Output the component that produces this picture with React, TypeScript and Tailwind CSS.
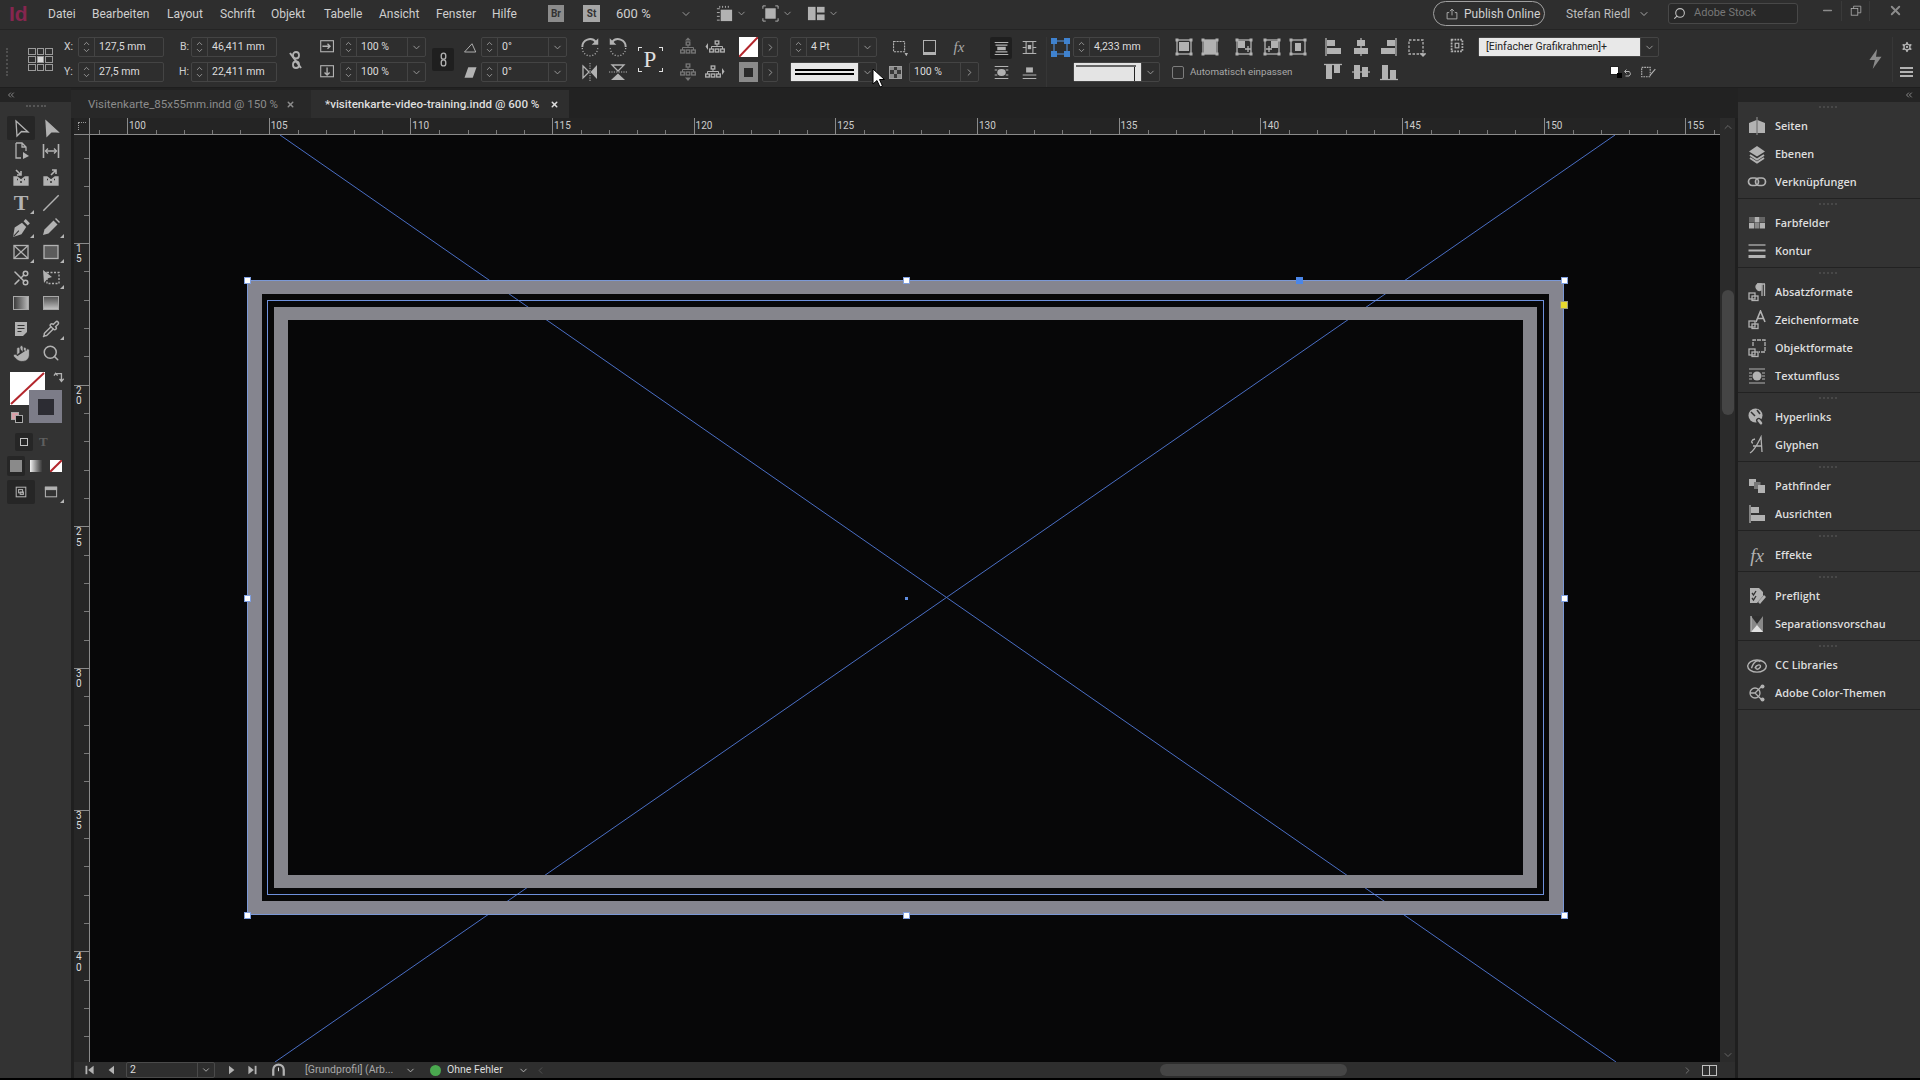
import type { ReactNode } from "react";
import { ChevronDown, ChevronRight, ChevronUp, ChevronLeft, ChevronsLeft, ChevronsRight, Hand, Pipette, Scissors, Search, Settings, X, Minus } from "lucide-react";

const FONT = "font-['Roboto','Liberation_Sans',sans-serif]";

function G({ s = 20, children, className = "" }: { s?: number; children: ReactNode; className?: string }) {
	return (
		<svg width={s} height={s} viewBox="0 0 20 20" fill="none" stroke="currentColor" strokeWidth="1.3" className={`shrink-0 text-[#b2b2b2] ${className}`}>
			{children}
		</svg>
	);
}

function Fly() {
	return <span className="absolute right-[1px] bottom-[1px] h-0 w-0 border-b-[4px] border-l-[4px] border-b-[#b5b5b5] border-l-transparent" />;
}

function ToolCell({ children, fly = false, active = false }: { children: ReactNode; fly?: boolean; active?: boolean }) {
	return (
		<div className={`relative flex h-[24px] w-[28px] items-center justify-center rounded-[2px] ${active ? "bg-[#262626]" : ""}`}>
			{children}
			{fly && <Fly />}
		</div>
	);
}

function ToolRow({ className, children }: { className: string; children: ReactNode }) {
	return <div className={`flex items-center gap-[2px] pl-[7px] ${className}`}>{children}</div>;
}

function Toolbar() {
	return (
		<div className="flex w-[71px] shrink-0 flex-col bg-[#242424]">
			<div className="flex h-[14px] items-center pl-[6px] text-[#9a9a9a]">
				<ChevronsLeft size={10} />
			</div>
			<div className="flex flex-1 flex-col bg-[#333333]">
				<div className="flex h-[15px] justify-center pt-[3px]">
					<div className="h-[3px] w-[20px] border-t-2 border-dotted border-[#565656]" />
				</div>
				<ToolRow className="h-[22px]">
					<ToolCell active>
						<G><path d="M5 3 L17 14 L10.5 13.5 L6 18 Z" /></G>
					</ToolCell>
					<ToolCell>
						<G><path d="M5 3 L17 14 L10.5 13.5 L6 18 Z" fill="currentColor" /></G>
					</ToolCell>
				</ToolRow>
				<ToolRow className="h-[24px]">
					<ToolCell>
						<G><path d="M5 2 H11 L15 6 V10 M5 2 V17 H10 M11 2 V6 H15" /><path d="M12 11 L18 15 L12 18 Z" fill="currentColor" stroke="none" /></G>
					</ToolCell>
					<ToolCell>
						<G><path d="M2.5 3 V17 M17.5 3 V17 M5 10 H15" strokeWidth="1.6" /><path d="M7 7.5 L4.5 10 L7 12.5 M13 7.5 L15.5 10 L13 12.5" /></G>
					</ToolCell>
				</ToolRow>
				<ToolRow className="h-[28px]">
					<ToolCell>
						<G><path d="M3 10 H6 L10 13 L14 10 H17 V18 H3 Z" fill="currentColor" /><path d="M6 12.5 H7 M9 15 H11 M13 12.5 H14" stroke="#333" /><path d="M5 3 L10 8 M10 4 V8 H6" strokeWidth="1.6" /></G>
					</ToolCell>
					<ToolCell>
						<G><path d="M3 10 H6 L10 13 L14 10 H17 V18 H3 Z" fill="currentColor" /><path d="M6 12.5 H7 M9 15 H11 M13 12.5 H14" stroke="#333" /><path d="M10 8 L15 3 M11 3 H15 V7" strokeWidth="1.6" /></G>
					</ToolCell>
				</ToolRow>
				<ToolRow className="h-[24px]">
					<ToolCell fly>
						<span className="font-['Liberation_Serif',serif] text-[22px] leading-none font-bold text-[#b2b2b2]">T</span>
					</ToolCell>
					<ToolCell>
						<G s={22}><path d="M3 17 L17 3" strokeWidth="1.3" /></G>
					</ToolCell>
				</ToolRow>
				<ToolRow className="h-[24px]">
					<ToolCell fly>
						<G s={21}><path d="M2 19 L3.5 10 L10.5 5.5 L14.5 9.5 L10 16.5 Z" fill="currentColor" stroke="none" /><path d="M12 4 L14 2 L18 6 L16 8 Z" fill="currentColor" stroke="none" /><path d="M2.5 18.5 L7.5 13" stroke="#333" strokeWidth="1" /></G>
					</ToolCell>
					<ToolCell fly>
						<G s={20}><path d="M2 18 L3.5 12.5 L12.5 3.5 L16.5 7.5 L7.5 16.5 Z" fill="currentColor" stroke="none" /><path d="M14 2 L15 1 L19 5 L18 6 Z" fill="currentColor" stroke="none" /></G>
					</ToolCell>
				</ToolRow>
				<ToolRow className="h-[26px]">
					<ToolCell fly>
						<G><rect x="3" y="3.5" width="14" height="13" /><path d="M3 3.5 L17 16.5 M17 3.5 L3 16.5" /></G>
					</ToolCell>
					<ToolCell fly>
						<G><rect x="3" y="3.5" width="14" height="13" fill="#5c5c5c" /></G>
					</ToolCell>
				</ToolRow>
				<ToolRow className="h-[26px]">
					<ToolCell>
						<Scissors size={18} className="-scale-x-100 text-[#b8b8b8]" strokeWidth={2} />
					</ToolCell>
					<ToolCell fly>
						<G><rect x="6" y="4.5" width="12" height="11" strokeDasharray="2 1.5" /><path d="M2 2 L11 9 L6.5 10.5 L3 15 Z" fill="currentColor" stroke="none" /></G>
					</ToolCell>
				</ToolRow>
				<ToolRow className="h-[24px]">
					<ToolCell>
						<div className="h-[14px] w-[16px] border border-[#a8a8a8] bg-gradient-to-r from-[#3e3e3e] to-[#b8b8b8]" />
					</ToolCell>
					<ToolCell>
						<div className="h-[14px] w-[16px] border border-[#a8a8a8] bg-gradient-to-b from-[#555555] to-[#c0c0c0]" />
					</ToolCell>
				</ToolRow>
				<ToolRow className="h-[28px]">
					<ToolCell>
						<G><path d="M4 3 H16 V13 L12 17 H4 Z" fill="currentColor" stroke="none" /><path d="M6.5 6.5 H13.5 M6.5 9.5 H13.5 M6.5 12.5 H10.5" stroke="#333" strokeWidth="1.2" /></G>
					</ToolCell>
					<ToolCell fly>
						<Pipette size={18} className="text-[#b2b2b2]" />
					</ToolCell>
				</ToolRow>
				<ToolRow className="h-[20px]">
					<ToolCell>
						<Hand size={19} className="text-[#c2c2c2]" fill="#b2b2b2" stroke="#333" strokeWidth={1} />
					</ToolCell>
					<ToolCell>
						<Search size={18} className="text-[#b2b2b2]" />
					</ToolCell>
				</ToolRow>
				<div className="relative h-[70px]">
					<div className="absolute top-[9px] left-[10px] h-[33px] w-[35px] overflow-hidden bg-white">
						<svg width="35" height="33" viewBox="0 0 35 33">
							<path d="M1 32 L34 1" stroke="#b3262c" strokeWidth="2" />
						</svg>
					</div>
					<div className="absolute top-[27px] left-[29px] flex h-[33px] w-[33px] items-center justify-center bg-[#7c7c88]">
						<div className="h-[16px] w-[16px] bg-[#2c2c33]" />
					</div>
					<div className="absolute top-[8px] left-[53px]">
						<G s={13}><path d="M4 4 H13 V15 M1.5 7 L4 3.5 L7 7 M10 12 L13 16 L16.5 12" strokeWidth="2" /></G>
					</div>
					<div className="absolute top-[49px] left-[11px] h-[8px] w-[8px] border border-[#aaaaaa] bg-[#d8a0a8]" />
					<div className="absolute top-[52px] left-[15px] h-[8px] w-[8px] border border-[#aaaaaa] bg-[#1c1c1c]" />
				</div>
				<div className="flex h-[18px] items-center pl-[15px]">
					<div className="flex h-[18px] w-[18px] items-center justify-center rounded-[2px] bg-[#262626]">
						<div className="h-[8px] w-[8px] border border-[#c2c2c2]" />
					</div>
					<span className="ml-[6px] font-['Liberation_Serif',serif] text-[13px] font-bold text-[#5f5f5f]">T</span>
				</div>
				<div className="mt-[3px] flex h-[24px] items-center pl-[7px]">
					<div className="relative flex h-[20px] w-[18px] items-center justify-center rounded-[2px] bg-[#262626]">
						<div className="h-[12px] w-[12px] bg-[#8a8a8a]" />
					</div>
					<div className="ml-[5px] h-[12px] w-[12px] bg-gradient-to-r from-[#f2f2f2] to-[#3a3a3a]" />
					<div className="ml-[8px] h-[12px] w-[12px] overflow-hidden bg-white">
						<svg width="12" height="12" viewBox="0 0 12 12"><path d="M0 12 L12 0" stroke="#b3262c" strokeWidth="2" /></svg>
					</div>
				</div>
				<div className="mt-[2px] flex h-[24px] items-center gap-[2px] pl-[7px]">
					<ToolCell active>
						<G s={16}><rect x="4" y="4" width="12" height="12" /><rect x="7" y="7" width="5" height="4" /><rect x="9" y="10" width="4" height="3" /></G>
					</ToolCell>
					<ToolCell fly>
						<G s={16}><rect x="3" y="4" width="14" height="12" /><rect x="3" y="4" width="14" height="3" fill="currentColor" /></G>
					</ToolCell>
				</div>
			</div>
		</div>
	);
}

function Spin() {
	return (
		<div className="flex h-full w-[16px] shrink-0 flex-col items-center justify-center border-r border-[#444444] text-[#b0b0b0]">
			<ChevronUp size={9} className="-mb-[1px]" />
			<ChevronDown size={9} className="-mt-[1px]" />
		</div>
	);
}

function Drop() {
	return (
		<div className="flex h-full w-[18px] shrink-0 items-center justify-center border-l border-[#444444] text-[#a0a0a0]">
			<ChevronDown size={11} />
		</div>
	);
}

function Field({ value, drop = false }: { value: string; drop?: boolean }) {
	return (
		<div className="flex h-[20px] w-full items-center rounded-[2px] border border-[#444444] text-[10.5px] text-[#dcdcdc]">
			<Spin />
			<span className="flex-1 truncate pl-[4px]">{value}</span>
			{drop && <Drop />}
		</div>
	);
}

function Col({ className = "", children }: { className?: string; children: ReactNode }) {
	return <div className={`flex h-[45px] shrink-0 flex-col items-center justify-between ${className}`}>{children}</div>;
}

function Slot({ children, className = "" }: { children?: ReactNode; className?: string }) {
	return <div className={`flex h-[20px] shrink-0 items-center justify-center ${className}`}>{children}</div>;
}

function SwatchNone() {
	return (
		<div className="h-[20px] w-[19px] overflow-hidden bg-white">
			<svg width="19" height="20" viewBox="0 0 19 20"><path d="M0 20 L19 0" stroke="#b3262c" strokeWidth="2" /></svg>
		</div>
	);
}

function ArrowBox() {
	return (
		<div className="flex h-[20px] w-[16px] items-center justify-center rounded-[2px] border border-[#444444] text-[#a0a0a0]">
			<ChevronRight size={11} />
		</div>
	);
}

function RefGrid() {
	return (
		<div className="grid w-[25px] grid-cols-3 gap-[1px]">
			{[0, 1, 2, 3, 4, 5, 6, 7, 8].map(i => (
				<div key={i} className={`h-[7px] w-[7.5px] border border-[#9a9a9a] ${i === 4 ? "bg-[#d8d8d8]" : ""}`} />
			))}
		</div>
	);
}

function AlignIcon({ kind }: { kind: "l" | "c" | "r" | "t" | "m" | "b" }) {
	return (
		<G>
			{kind === "l" && <><path d="M3 1 V19" /><rect x="4" y="3" width="8" height="6" fill="currentColor" stroke="none" /><rect x="4" y="11" width="14" height="6" fill="currentColor" stroke="none" /></>}
			{kind === "c" && <><path d="M10 1 V19" /><rect x="6" y="3" width="8" height="6" fill="currentColor" stroke="none" /><rect x="3" y="11" width="14" height="6" fill="currentColor" stroke="none" /></>}
			{kind === "r" && <><path d="M17 1 V19" /><rect x="8" y="3" width="8" height="6" fill="currentColor" stroke="none" /><rect x="2" y="11" width="14" height="6" fill="currentColor" stroke="none" /></>}
			{kind === "t" && <><path d="M1 2.5 H19" /><rect x="3" y="3" width="6" height="14" fill="currentColor" stroke="none" /><rect x="11" y="3" width="6" height="8" fill="currentColor" stroke="none" /></>}
			{kind === "m" && <><path d="M1 10 H19" /><rect x="3" y="3" width="6" height="14" fill="currentColor" stroke="none" /><rect x="11" y="5" width="6" height="10" fill="currentColor" stroke="none" /></>}
			{kind === "b" && <><path d="M1 17.5 H19" /><rect x="3" y="3" width="6" height="14" fill="currentColor" stroke="none" /><rect x="11" y="8" width="6" height="9" fill="currentColor" stroke="none" /></>}
		</G>
	);
}

function FrameFit({ inner }: { inner: ReactNode }) {
	return (
		<G>
			<rect x="3" y="3" width="14" height="14" />
			{inner}
			<path d="M1.5 1.5 h3 v3 h-3 z M15.5 1.5 h3 v3 h-3 z M1.5 15.5 h3 v3 h-3 z M15.5 15.5 h3 v3 h-3 z" fill="currentColor" stroke="none" />
		</G>
	);
}

function RotateIcon({ flip = false }: { flip?: boolean }) {
	return (
		<G s={22} className={flip ? "-scale-x-100" : ""}>
			<path d="M3 10 A7 7 0 0 1 15.5 5.5" strokeWidth="1.8" />
			<path d="M3 11 A7 7 0 0 0 17 11" strokeDasharray="1 1.6" strokeWidth="1.2" />
			<path d="M17.5 2 V8 H11.5 Z" fill="currentColor" stroke="none" />
		</G>
	);
}

function TreeIcon({ top }: { top: number }) {
	return (
		<>
			<rect x="8.2" y={top} width="3.6" height="3" />
			<path d={`M10 ${top + 3} V${top + 5.5} M4.5 ${top + 8} V${top + 5.5} H15.5 V${top + 8}`} strokeWidth="1" />
			<rect x="2.7" y={top + 8} width="3.6" height="3" />
			<rect x="8.2" y={top + 8} width="3.6" height="3" />
			<rect x="13.7" y={top + 8} width="3.6" height="3" />
		</>
	);
}

function MenuBar() {
	const items: [string, string][] = [
		["Datei", "w-[44px]"],
		["Bearbeiten", "w-[75px]"],
		["Layout", "w-[53px]"],
		["Schrift", "w-[51px]"],
		["Objekt", "w-[53px]"],
		["Tabelle", "w-[55px]"],
		["Ansicht", "w-[57px]"],
		["Fenster", "w-[56px]"],
		["Hilfe", "w-[56px]"]
	];
	return (
		<div className="flex h-[30px] shrink-0 items-center border-b border-[#242424] bg-[#2e2e2e] pb-[2px] text-[12px] text-[#cfcfcf]">
			<span className="ml-[9px] w-[39px] font-['Liberation_Sans',sans-serif] text-[21px] leading-none font-bold text-[#86264f]">Id</span>
			{items.map(([label, w]) => (
				<span key={label} className={w}>{label}</span>
			))}
			<span className="flex h-[17px] w-[16px] items-center justify-center bg-[#8c8c8c] text-[10px] font-bold text-[#333333]">Br</span>
			<span className="ml-[19px] flex h-[17px] w-[17px] items-center justify-center bg-[#a6a6a6] text-[10px] font-bold text-[#333333]">St</span>
			<span className="ml-[16px] w-[64px] text-[13px]">600 %</span>
			<ChevronDown size={12} className="text-[#9a9a9a]" />
			<div className="ml-[22px] flex w-[20px] justify-center">
				<G s={19}><path d="M2 5 H5 M2 9 H5 M2 13 H5 M2 17 H5 M5 2 V4 M8 2 V4 M11 2 V4 M14 2 V4" strokeWidth="1" /><rect x="6" y="6" width="12" height="12" fill="currentColor" stroke="none" /></G>
			</div>
			<ChevronDown size={11} className="ml-[2px] text-[#9a9a9a]" />
			<div className="ml-[13px] flex w-[20px] justify-center">
				<G s={19}><path d="M2 5 V2 H5 M15 2 H18 V5 M18 15 V18 H15 M5 18 H2 V15" strokeWidth="1" /><rect x="4.5" y="4.5" width="11" height="11" fill="currentColor" stroke="none" /></G>
			</div>
			<ChevronDown size={11} className="ml-[2px] text-[#9a9a9a]" />
			<div className="ml-[13px] flex w-[20px] justify-center">
				<G s={19}><rect x="1" y="3" width="8" height="14" fill="currentColor" stroke="none" /><rect x="10.5" y="3" width="8" height="6" fill="currentColor" stroke="none" /><rect x="10.5" y="11" width="8" height="6" fill="currentColor" stroke="none" /></G>
			</div>
			<ChevronDown size={11} className="ml-[2px] text-[#9a9a9a]" />
			<div className="flex-1" />
			<div className="flex h-[25px] w-[112px] items-center rounded-full border border-[#a0a0a0] pl-[11px] text-[#d2d2d2]">
				<G s={14}><path d="M10 12 V3 M7 6 L10 3 L13 6 M6 8 H3 V17 H17 V8 H14" /></G>
				<span className="ml-[5px] whitespace-nowrap">Publish Online</span>
			</div>
			<span className="ml-[21px] w-[72px] text-[#bdbdbd]">Stefan Riedl</span>
			<ChevronDown size={12} className="text-[#a8a8a8]" />
			<div className="ml-[18px] flex h-[21px] w-[130px] items-center rounded-[3px] border border-[#484848] bg-[#282828] pl-[4px] text-[11px] text-[#777777]">
				<Search size={13} className="-scale-x-100 text-[#c0c0c0]" />
				<span className="ml-[8px]">Adobe Stock</span>
			</div>
			<div className="ml-[16px] flex h-[20px] -translate-y-[3px] items-center text-[#8c8c8c]">
				<div className="flex h-full w-[28px] items-center justify-center border-r border-[#3a3a3a]"><Minus size={13} strokeWidth={3} /></div>
				<div className="flex h-full w-[28px] items-center justify-center border-r border-[#3a3a3a]"><G s={12}><rect x="2" y="6" width="11" height="11" /><path d="M6 6 V2 H18 V13 H13" /></G></div>
				<div className="flex h-full w-[50px] items-center justify-center"><X size={15} strokeWidth={3} /></div>
			</div>
		</div>
	);
}

function ControlBar() {
	return (
		<div className="flex h-[58px] shrink-0 border-b border-[#1e1e1e] bg-[#2e2e2e] pt-[7px] text-[10.5px] text-[#cfcfcf]">
			<div className="flex w-[28px] shrink-0 items-center pl-[6px]">
				<div className="h-[28px] w-[3px] border-l-2 border-dotted border-[#4f4f4f]" />
			</div>
			<div className="flex h-[45px] w-[36px] shrink-0 items-center"><RefGrid /></div>
			<Col className="w-[14px] !items-start"><Slot>X:</Slot><Slot>Y:</Slot></Col>
			<Col className="w-[86px]"><Field value="127,5 mm" /><Field value="27,5 mm" /></Col>
			<Col className="w-[27px] !items-end pr-[2px]"><Slot>B:</Slot><Slot>H:</Slot></Col>
			<Col className="w-[86px]"><Field value="46,411 mm" /><Field value="22,411 mm" /></Col>
			<div className="flex h-[45px] w-[38px] shrink-0 items-center justify-center">
				<G s={20}><rect x="7" y="2" width="6" height="6.5" rx="3" strokeWidth="1.8" /><rect x="7" y="11.5" width="6" height="6.5" rx="3" strokeWidth="1.8" /><path d="M4 3 L15 18" strokeWidth="2" /></G>
			</div>
			<Col className="w-[25px]">
				<Slot><G s={17}><rect x="2" y="2" width="15" height="13" /><path d="M4 8.5 H13 M10 5.5 L13 8.5 L10 11.5" strokeWidth="1.6" /></G></Slot>
				<Slot><G s={17}><rect x="2" y="2" width="15" height="13" /><path d="M9.5 4 V13 M6.5 10 L9.5 13 L12.5 10" strokeWidth="1.6" /></G></Slot>
			</Col>
			<Col className="w-[86px]"><Field value="100 %" drop /><Field value="100 %" drop /></Col>
			<div className="flex h-[45px] w-[34px] shrink-0 items-center justify-center">
				<div className="flex h-[23px] w-[22px] items-center justify-center rounded-[2px] bg-[#1f1f1f]">
					<G s={15}><rect x="7" y="1.5" width="6" height="8" rx="3" strokeWidth="1.8" /><rect x="7" y="10.5" width="6" height="8" rx="3" strokeWidth="1.8" /></G>
				</div>
			</div>
			<Col className="w-[21px]">
				<Slot><G s={15}><path d="M2 16 H17 L12 5 M2 16 L12 5" /></G></Slot>
				<Slot><G s={15}><path d="M2 17 L7 3 H18 L13 17 Z" fill="currentColor" stroke="none" /></G></Slot>
			</Col>
			<Col className="w-[86px]"><Field value="0°" drop /><Field value="0°" drop /></Col>
			<div className="w-[9px] shrink-0" />
			<Col className="w-[28px]">
				<Slot><RotateIcon /></Slot>
				<Slot><G><path d="M3 4 L9 10 L3 16 Z" /><path d="M17 3 L10.5 10 L17 17 Z" fill="currentColor" stroke="none" /><path d="M10 1 V19" strokeDasharray="1.2 1.2" strokeWidth="1" /></G></Slot>
			</Col>
			<Col className="w-[28px]">
				<Slot><RotateIcon flip /></Slot>
				<Slot><G><path d="M4 3 H16 L10 9 Z" /><path d="M3 18 H17 L10 11.5 Z" fill="currentColor" stroke="none" /><path d="M1 10 H19" strokeDasharray="1.2 1.2" strokeWidth="1" /></G></Slot>
			</Col>
			<div className="flex h-[45px] w-[36px] shrink-0 items-center justify-center">
				<div className="relative flex h-[25px] w-[25px] items-center justify-center">
					<span className="font-['Liberation_Serif',serif] text-[23px] leading-none text-[#e0e0e0]">P</span>
					<span className="absolute top-0 left-0 h-[4px] w-[4px] border-t border-l border-[#e0e0e0]" />
					<span className="absolute top-0 right-0 h-[4px] w-[4px] border-t border-r border-[#e0e0e0]" />
					<span className="absolute bottom-0 left-0 h-[4px] w-[4px] border-b border-l border-[#e0e0e0]" />
					<span className="absolute right-0 bottom-0 h-[4px] w-[4px] border-r border-b border-[#e0e0e0]" />
				</div>
			</div>
			<div className="w-[6px] shrink-0" />
			<Col className="w-[28px]">
				<Slot><G className="!text-[#777777]"><path d="M10 0.5 L13 3.5 H7 Z" fill="currentColor" stroke="none" /><TreeIcon top={5} /></G></Slot>
				<Slot><G className="!text-[#777777]"><TreeIcon top={2} /><path d="M10 19 L13 15.5 H7 Z" fill="currentColor" stroke="none" /></G></Slot>
			</Col>
			<Col className="w-[26px]">
				<Slot><G><path d="M0.5 9.5 L3 6 V13 Z" fill="currentColor" stroke="none" /><g transform="translate(2 2)"><TreeIcon top={2} /></g></G></Slot>
				<Slot><G><g transform="translate(-2 2)"><TreeIcon top={2} /></g><path d="M19.5 9.5 L17 6 V13 Z" fill="currentColor" stroke="none" /></G></Slot>
			</Col>
			<div className="w-[11px] shrink-0" />
			<Col className="w-[19px]">
				<SwatchNone />
				<div className="flex h-[20px] w-[19px] items-center justify-center bg-[#8a8a8a]">
					<div className="h-[9px] w-[9px] bg-[#2a2a2a]" />
				</div>
			</Col>
			<div className="w-[4px] shrink-0" />
			<Col className="w-[16px]"><ArrowBox /><ArrowBox /></Col>
			<div className="w-[12px] shrink-0" />
			<Col className="w-[87px]">
				<Field value="4 Pt" drop />
				<div className="flex h-[20px] w-full items-center rounded-[2px] border border-[#444444]">
					<div className="flex h-full flex-1 flex-col justify-center gap-[2px] bg-[#e8e8e8] px-[4px]">
						<div className="h-[2px] bg-black" />
						<div className="h-[2px] bg-black" />
					</div>
					<Drop />
				</div>
			</Col>
			<div className="w-[7px] shrink-0" />
			<Col className="w-[95px] !items-start">
				<div className="flex h-[20px] items-center">
					<div className="flex w-[30px] justify-center"><G s={17}><rect x="3" y="3" width="13" height="12" strokeDasharray="2.5 1" /><path d="M17 17 L19 17 L18 19 Z" fill="currentColor" /></G></div>
					<div className="flex w-[30px] justify-center"><div className="h-[15px] w-[13px] border border-[#b2b2b2] border-b-[3px]" /></div>
					<span className="w-[30px] text-center font-['Liberation_Serif',serif] text-[15px] text-[#a8a8a8] italic">fx</span>
				</div>
				<div className="flex h-[20px] w-full items-center">
					<div className="flex w-[25px] pl-[5px]">
						<div className="grid h-[13px] w-[13px] grid-cols-3 border border-[#a0a0a0]">
							{[0, 1, 2, 3, 4, 5, 6, 7, 8].map(i => (
								<div key={i} className={i % 2 === 0 ? "bg-[#8c8c8c]" : "bg-[#3a3a3a]"} />
							))}
						</div>
					</div>
					<div className="flex h-full w-[70px] items-center rounded-[2px] border border-[#444444] text-[#dcdcdc]">
						<span className="flex-1 pl-[4px]">100 %</span>
						<div className="flex h-full w-[18px] items-center justify-center border-l border-[#444444] text-[#a0a0a0]"><ChevronRight size={11} /></div>
					</div>
				</div>
			</Col>
			<div className="w-[8px] shrink-0" />
			<Col className="w-[28px]">
				<Slot className="h-[22px] w-[22px] rounded-[2px] bg-[#1f1f1f]"><G s={17}><path d="M2 3 H18 M2 17 H18 M3 6 H17 M3 14 H17" /><rect x="5" y="8" width="10" height="4" fill="currentColor" stroke="none" /></G></Slot>
				<Slot><G s={17}><path d="M2 3 H18 M2 17 H18" /><ellipse cx="10" cy="10" rx="5" ry="4" fill="currentColor" stroke="none" /><path d="M2 7 H5 M15 7 H18 M2 13 H5 M15 13 H18" /></G></Slot>
			</Col>
			<Col className="w-[28px]">
				<Slot><G s={17}><rect x="6" y="3" width="8" height="14" /><rect x="8" y="7" width="4" height="5" fill="currentColor" stroke="none" /><path d="M2 3 H6 M14 3 H18 M2 17 H6 M14 17 H18 M2 10 H6 M14 10 H18" /></G></Slot>
				<Slot><G s={17}><path d="M2 13 H18 M2 17 H18" /><rect x="6" y="4" width="8" height="6" fill="currentColor" stroke="none" /></G></Slot>
			</Col>
			<div className="w-[4px] shrink-0 border-r border-[#363636]" />
			<div className="flex h-[45px] w-[26px] shrink-0 items-start justify-center pt-[1px]">
				<svg width="19" height="19" viewBox="0 0 19 19">
					<rect x="3" y="3" width="13" height="13" fill="none" stroke="#4f86c8" strokeWidth="1.2" />
					<path d="M0 0 h6 v6 h-6 z M13 0 h6 v6 h-6 z M0 13 h6 v6 h-6 z M13 13 h6 v6 h-6 z" fill="#3f82cf" />
				</svg>
			</div>
			<Col className="w-[87px]">
				<Field value="4,233 mm" />
				<div className="flex h-[20px] w-full items-center rounded-[2px] border border-[#444444]">
					<div className="flex h-full flex-1 flex-col bg-[#e4e4e4] pt-[2px] pl-[2px]">
						<div className="h-[2px] w-[60px] bg-[#666666]" />
						<div className="ml-[58px] h-[14px] w-[1px] bg-[#222222]" />
					</div>
					<Drop />
				</div>
			</Col>
			<div className="w-[12px] shrink-0" />
			<Col className="w-[147px] !items-start">
				<div className="flex h-[20px] items-center">
					<div className="flex w-[24px] justify-center">
						<FrameFit inner={<rect x="5" y="5" width="10" height="9" fill="currentColor" stroke="none" />} />
					</div>
					<div className="flex w-[28px] justify-center">
						<FrameFit inner={<rect x="4" y="3" width="12" height="14" fill="currentColor" stroke="none" />} />
					</div>
					<div className="ml-[6px] flex w-[28px] justify-center">
						<FrameFit inner={<><rect x="4" y="4" width="7" height="7" fill="currentColor" stroke="none" /><path d="M14 9 V15 M11 12 H17" /></>} />
					</div>
					<div className="flex w-[28px] justify-center">
						<FrameFit inner={<><rect x="9" y="4" width="7" height="7" fill="currentColor" stroke="none" /><path d="M7 9 V15 M4 12 H10" /></>} />
					</div>
					<div className="flex w-[24px] justify-center">
						<FrameFit inner={<rect x="7" y="6" width="6" height="8" fill="currentColor" stroke="none" />} />
					</div>
				</div>
				<div className="flex h-[20px] items-center whitespace-nowrap text-[9.8px] text-[#a8a8a8]">
					<div className="h-[13px] w-[12px] rounded-[2px] border border-[#7c7c7c]" />
					<span className="ml-[6px]">Automatisch einpassen</span>
				</div>
			</Col>
			<Col className="w-[28px]"><AlignIcon kind="l" /><AlignIcon kind="t" /></Col>
			<Col className="w-[28px]"><AlignIcon kind="c" /><AlignIcon kind="m" /></Col>
			<Col className="w-[27px]"><AlignIcon kind="r" /><AlignIcon kind="b" /></Col>
			<Col className="w-[28px] !justify-start">
				<G><rect x="3" y="3" width="14" height="14" strokeDasharray="2.5 1.5" /><path d="M15 17 H19 L17 19 Z" fill="currentColor" /></G>
			</Col>
			<div className="w-[13px] shrink-0" />
			<Col className="w-[28px] !justify-start">
				<G s={18}><rect x="4" y="3" width="12" height="13" strokeDasharray="2 1.2" strokeWidth="2" /><rect x="8" y="7" width="4" height="5" /></G>
			</Col>
			<div className="w-[7px] shrink-0" />
			<Col className="w-[181px]">
				<div className="flex h-[20px] w-full items-center rounded-[2px] border border-[#444444]">
					<span className="flex h-full flex-1 items-center bg-[#e8e8e8] pl-[7px] text-[10.5px] text-[#222222]">[Einfacher Grafikrahmen]+</span>
					<Drop />
				</div>
				<div className="flex h-[20px] w-full items-center justify-end pr-[2px]">
					<div className="flex items-center">
						<div className="relative h-[12px] w-[12px]">
							<div className="absolute top-0 left-0 h-[9px] w-[9px] border border-[#222222] bg-white" />
							<div className="absolute right-0 bottom-0 h-[5px] w-[5px] bg-black" />
						</div>
						<G s={10} className="mr-[7px] ml-[1px]"><path d="M4 9 H12 A5 5 0 0 1 12 18 H5 M7 5 L3 9 L7 13" strokeWidth="2" /></G>
					</div>
					<G s={17}><rect x="2" y="4" width="10" height="11" strokeDasharray="2 1" /><path d="M12 13 L18 6" /></G>
				</div>
			</Col>
			<div className="flex-1" />
			<div className="flex h-[45px] w-[27px] shrink-0 items-center justify-start pb-[2px]">
				<G s={22} className="!text-[#8a8a8a]"><path d="M11 1 L4 11 H9 L7 19 L15 8 H10 Z" fill="currentColor" stroke="none" /></G>
			</div>
			<Col className="w-[28px] border-l border-[#373737]">
				<Slot><Settings size={14} className="text-[#b2b2b2]" fill="#b2b2b2" stroke="#2e2e2e" /></Slot>
				<Slot>
					<div className="flex w-[13px] flex-col gap-[2.5px]">
						<div className="h-[1.5px] bg-[#b2b2b2]" />
						<div className="h-[1.5px] bg-[#b2b2b2]" />
						<div className="h-[1.5px] bg-[#b2b2b2]" />
					</div>
				</Slot>
			</Col>
		</div>
	);
}

function Tabs() {
	return (
		<div className="flex h-[30px] shrink-0 items-end bg-[#222222] text-[11.5px]">
			<div className="flex h-[28px] w-[240px] items-center bg-[#282828] pt-[1px] pl-[17px] text-[#8c8c8c]">
				<span className="w-[198px] whitespace-nowrap">Visitenkarte_85x55mm.indd @ 150 %</span>
				<X size={9} strokeWidth={4} className="text-[#8c8c8c]" />
			</div>
			<div className="flex h-[28px] w-[258px] items-center bg-[#2e2e2e] pt-[1px] pl-[14px] text-[11.6px] font-medium text-[#dedede]">
				<span className="w-[225px] whitespace-nowrap">*visitenkarte-video-training.indd @ 600 %</span>
				<X size={9} strokeWidth={4} className="text-[#dedede]" />
			</div>
		</div>
	);
}

function RulerSectionH({ label }: { label: number }) {
	return (
		<div className="flex h-full w-[141.67px] shrink-0 border-l border-[#8a8a8a]">
			<span className="flex-1 pl-[1px] text-[10px] leading-[15px] text-[#cccccc]">{label}</span>
			<div className="h-[4px] flex-1 self-end border-l border-[#7a7a7a]" />
			<div className="h-[4px] flex-1 self-end border-l border-[#7a7a7a]" />
			<div className="h-[4px] flex-1 self-end border-l border-[#7a7a7a]" />
			<div className="h-[4px] flex-1 self-end border-l border-[#7a7a7a]" />
		</div>
	);
}

function RulerSectionV({ label }: { label: number }) {
	return (
		<div className="flex h-[141.67px] w-full shrink-0 flex-col border-t border-[#8a8a8a]">
			<div className="flex flex-1 flex-col pl-[2px] text-[10px] leading-[10.5px] text-[#dddddd]">
				{String(label).split("").map((c, i) => (
					<span key={i}>{c}</span>
				))}
			</div>
			<div className="w-[5px] flex-1 self-end border-t border-[#7a7a7a]" />
			<div className="w-[5px] flex-1 self-end border-t border-[#7a7a7a]" />
			<div className="w-[5px] flex-1 self-end border-t border-[#7a7a7a]" />
			<div className="w-[5px] flex-1 self-end border-t border-[#7a7a7a]" />
		</div>
	);
}

function Handle({ className }: { className: string }) {
	return <div className={`absolute h-[7px] w-[7px] border border-[#7f9fe0] bg-white ${className}`} />;
}

function CanvasArea() {
	return (
		<div className="relative h-[927px] flex-1 overflow-hidden bg-[#070708]">
			<svg width="1630" height="927" viewBox="0 0 1630 927" className="absolute inset-0">
				<path d="M190 0 L1526 927" stroke="#4a6ec4" strokeWidth="1" />
				<path d="M1525 0 L185 927" stroke="#4a6ec4" strokeWidth="1" />
			</svg>
			<div className="absolute top-[145px] left-[157px] h-[635px] w-[1317px] border border-[#7b98d6]">
				<div className="h-full w-full border-x-[14px] border-y-[13px] border-[#85858f] px-[5px] py-[6px]">
					<div className="h-full w-full border border-[#6e90dc] px-[6px] py-[6px]">
						<div className="h-full w-full border-x-[14px] border-y-[13px] border-[#85858c]" />
					</div>
				</div>
			</div>
			<Handle className="top-[142px] left-[154px]" />
			<Handle className="top-[142px] left-[813px]" />
			<Handle className="top-[142px] left-[1471px]" />
			<Handle className="top-[460px] left-[154px]" />
			<Handle className="top-[460px] left-[1471px]" />
			<Handle className="top-[777px] left-[154px]" />
			<Handle className="top-[777px] left-[813px]" />
			<Handle className="top-[777px] left-[1471px]" />
			<div className="absolute top-[142px] left-[1206px] h-[7px] w-[7px] bg-[#4a86e8]" />
			<div className="absolute top-[166px] left-[1470px] h-[8px] w-[8px] border border-[#9a9a80] bg-[#e6d92f]" />
			<div className="absolute top-[462px] left-[815px] h-[3px] w-[3px] bg-[#5f8de0]" />
		</div>
	);
}

function StatusBar() {
	return (
		<div className="flex h-[16px] shrink-0 items-center bg-[#2e2e2e] text-[10.5px] text-[#bcbcbc]">
			<div className="flex w-[22px] justify-end">
				<G s={12}><path d="M4 3 V17" strokeWidth="3" /><path d="M16 3 V17 L7 10 Z" fill="currentColor" stroke="none" /></G>
			</div>
			<div className="ml-[9px] w-[12px]">
				<G s={12}><path d="M15 3 V17 L6 10 Z" fill="currentColor" stroke="none" /></G>
			</div>
			<div className="ml-[9px] flex h-full w-[89px] items-center rounded-[2px] border border-[#4a4a4a]">
				<span className="flex-1 pl-[3px] text-[#dddddd]">2</span>
				<div className="flex h-full w-[17px] items-center justify-center border-l border-[#4a4a4a]"><ChevronDown size={10} /></div>
			</div>
			<div className="ml-[11px] w-[12px]">
				<G s={12}><path d="M5 3 V17 L14 10 Z" fill="currentColor" stroke="none" /></G>
			</div>
			<div className="ml-[8px] w-[12px]">
				<G s={12}><path d="M4 3 V17 L13 10 Z" fill="currentColor" stroke="none" /><path d="M16 3 V17" strokeWidth="3" /></G>
			</div>
			<div className="ml-[13px] w-[18px]">
				<G s={15}><path d="M3 17 V9 A7 7 0 0 1 17 9 V17" strokeWidth="3" /><path d="M10 6 V11" stroke="#dddddd" /></G>
			</div>
			<span className="ml-[16px] w-[100px] whitespace-nowrap text-[#a8a8a8]">[Grundprofil] (Arb...</span>
			<ChevronDown size={11} />
			<div className="ml-[14px] h-[11px] w-[11px] rounded-full bg-[#4aa84f]" />
			<span className="ml-[6px] w-[71px] whitespace-nowrap text-[#dcdcdc]">Ohne Fehler</span>
			<ChevronDown size={11} />
			<ChevronLeft size={11} className="ml-[6px] text-[#555555]" />
			<div className="ml-[614px] h-[12px] w-[187px] rounded-full bg-[#454545]" />
			<div className="flex-1" />
			<ChevronRight size={11} className="text-[#777777]" />
			<div className="ml-[9px] flex h-[11px] w-[15px] border border-[#c0c0c0]">
				<div className="h-full w-1/2 border-r border-[#c0c0c0]" />
			</div>
			<div className="ml-[8px] h-[10px] w-[10px]" />
		</div>
	);
}

function ScrollV() {
	return (
		<div className="flex w-[15px] shrink-0 flex-col items-center bg-[#2b2b2b] pt-[3px] text-[#666666]">
			<ChevronUp size={12} />
			<div className="mt-[157px] h-[125px] w-[12px] rounded-full bg-[#454545]" />
			<div className="flex-1" />
			<ChevronDown size={12} className="mb-[1px]" />
		</div>
	);
}

function Doc() {
	return (
		<div className="flex w-[1667px] shrink-0 flex-col bg-[#1f1f1f]">
			<Tabs />
			<div className="flex flex-1 flex-col pl-[3px]">
				<div className="flex w-[1661px] flex-1">
					<div className="flex w-[1646px] flex-col">
						<div className="flex h-[17px] shrink-0 bg-[#242424]">
							<div className="flex w-[16px] shrink-0 items-center justify-center border-r border-b border-[#8a8a8a]">
								<div className="h-[8px] w-[8px] border-t border-l border-dotted border-[#9a9a9a]" />
							</div>
							<div className="flex flex-1 overflow-hidden border-b border-[#8a8a8a]">
								<div className="w-[8.67px] shrink-0" />
								<div className="h-[4px] w-[28.33px] shrink-0 self-end border-l border-[#7a7a7a]" />
								{[100, 105, 110, 115, 120, 125, 130, 135, 140, 145, 150, 155].map(n => (
									<RulerSectionH key={n} label={n} />
								))}
							</div>
						</div>
						<div className="flex h-[927px]">
							<div className="flex w-[16px] shrink-0 flex-col overflow-hidden border-r border-[#8a8a8a] bg-[#262626]">
								<div className="h-[23px] shrink-0" />
								<div className="h-[28.33px] w-[5px] shrink-0 self-end border-t border-[#7a7a7a]" />
								<div className="h-[28.33px] w-[5px] shrink-0 self-end border-t border-[#7a7a7a]" />
								<div className="h-[28.33px] w-[5px] shrink-0 self-end border-t border-[#7a7a7a]" />
								{[15, 20, 25, 30, 35, 40].map(n => (
									<RulerSectionV key={n} label={n} />
								))}
							</div>
							<CanvasArea />
						</div>
					</div>
					<ScrollV />
				</div>
				<div className="w-[1661px]">
					<StatusBar />
				</div>
			</div>
		</div>
	);
}

const panelIcons: Record<string, ReactNode> = {
	Seiten: <G><path d="M9.5 4 L2 7 V17 H9.5 Z M10.5 4 L18 7 V17 H10.5 Z" fill="currentColor" stroke="none" /><path d="M10 1 V19" strokeWidth="0.8" /></G>,
	Ebenen: <G><path d="M10 2 L18 7.5 L10 12.5 L2 7.5 Z" fill="currentColor" stroke="none" /><path d="M3 11 L10 15.5 L17 11 M3 14 L10 18.5 L17 14" strokeWidth="2" /></G>,
	"Verknüpfungen": <G><rect x="1.5" y="6" width="10" height="7.5" rx="3.7" strokeWidth="1.7" /><rect x="8.5" y="6" width="10" height="7.5" rx="3.7" strokeWidth="1.7" /></G>,
	Farbfelder: <G><rect x="2" y="4" width="5" height="5.5" fill="#666" stroke="none" /><rect x="7.5" y="4" width="5" height="5.5" fill="currentColor" stroke="none" /><rect x="13" y="4" width="5" height="5.5" fill="#666" stroke="none" /><rect x="2" y="10" width="5" height="5.5" fill="currentColor" stroke="none" /><rect x="7.5" y="10" width="5" height="5.5" fill="#888" stroke="none" /><rect x="13" y="10" width="5" height="5.5" fill="currentColor" stroke="none" /></G>,
	Kontur: <G><path d="M1.5 4 H18.5" strokeWidth="1.3" /><path d="M1.5 9.5 H18.5" strokeWidth="2" /><path d="M1.5 15.5 H18.5" strokeWidth="3" /></G>,
	Absatzformate: <G><rect x="2" y="11" width="6" height="6" /><rect x="5" y="14" width="6" height="4.5" /><path d="M10 2 H18 M15 2 V14 M17.5 2 V14" /><path d="M14 2 H11 A3 3 0 0 0 14 8 Z" fill="currentColor" /></G>,
	Zeichenformate: <G><rect x="2" y="11" width="6" height="6" /><rect x="5" y="14" width="6" height="4.5" /><path d="M9 12 L13.5 1 L18 12 M10.5 8.5 H16.5" strokeWidth="1.6" /></G>,
	Objektformate: <G><rect x="2" y="11" width="6" height="6" /><rect x="5" y="14" width="6" height="4.5" /><path d="M6 8 V2 H18 V14 H12" strokeDasharray="4 1" /></G>,
	Textumfluss: <G><path d="M2 3 H18 M2 17 H18 M2 7 H5 M15 7 H18 M2 10 H5 M15 10 H18 M2 13 H5 M15 13 H18" strokeWidth="1" /><circle cx="10" cy="10" r="4.5" fill="currentColor" stroke="none" /></G>,
	Hyperlinks: <G><circle cx="8.5" cy="8.5" r="7" fill="currentColor" stroke="none" /><path d="M4 5 L8 9 M10 3 L13 7" stroke="#333" strokeWidth="1.5" /><rect x="11" y="11" width="4" height="7.5" rx="2" transform="rotate(-40 13 15)" fill="currentColor" stroke="#333" /></G>,
	Glyphen: <G><path d="M3 18 C8 15 11 8 14 2 L15 17 M6 11 H15 M8 4 C4 5 4 8 6 8" strokeWidth="1.3" /></G>,
	Pathfinder: <G><rect x="2" y="3" width="7" height="7" fill="currentColor" stroke="none" /><rect x="7" y="6" width="6.5" height="7" fill="#777" stroke="none" /><rect x="11" y="9" width="7" height="8" fill="currentColor" stroke="none" /></G>,
	Ausrichten: <AlignIcon kind="l" />,
	Effekte: <span className="flex h-[20px] w-[20px] items-center justify-center font-['Liberation_Serif',serif] text-[19px] leading-none text-[#b2b2b2] italic">fx</span>,
	Preflight: <G><path d="M3 2 H12 L16 6 V10 L10 17 H3 Z" fill="currentColor" stroke="none" /><path d="M5 7 L6.5 9 L9 5 M5 12 L6.5 14 L9 10" stroke="#333" /><path d="M11 16 L17 9 L19 11 L13 18 Z" fill="currentColor" stroke="none" /></G>,
	Separationsvorschau: <G><rect x="4" y="2" width="12" height="16" fill="#888" stroke="none" /><path d="M4 2 H16 L10 10 Z" fill="#2f2f2f" stroke="none" /><path d="M4 18 H16 L10 11 Z" fill="#e0e0e0" stroke="none" /><path d="M4 2 V18" /></G>,
	"CC Libraries": <G s={22}><ellipse cx="10" cy="11" rx="8.5" ry="5.5" /><path d="M5 13 C7 6 11 5 13 7 M8 13 C10 9 14 9 13 12 C11 15 8 14 9 11" /></G>,
	"Adobe Color-Themen": <G><circle cx="8" cy="10" r="5" /><path d="M8 10 L15 3 M8 10 L15 17 M8 10 H3" /><circle cx="15.5" cy="3.5" r="2" fill="currentColor" stroke="none" /><circle cx="15.5" cy="16.5" r="2" fill="currentColor" stroke="none" /></G>
};

const panelGroups: string[][] = [
	["Seiten", "Ebenen", "Verknüpfungen"],
	["Farbfelder", "Kontur"],
	["Absatzformate", "Zeichenformate", "Objektformate", "Textumfluss"],
	["Hyperlinks", "Glyphen"],
	["Pathfinder", "Ausrichten"],
	["Effekte"],
	["Preflight", "Separationsvorschau"],
	["CC Libraries", "Adobe Color-Themen"]
];

function RightPanel() {
	return (
		<div className="flex w-[182px] shrink-0 flex-col bg-[#242424]">
			<div className="flex h-[14px] shrink-0 items-center justify-end pr-[6px] text-[#9a9a9a]">
				<ChevronsRight size={10} className="rotate-180" />
			</div>
			<div className="flex flex-1 flex-col bg-[#333333]">
				{panelGroups.map(group => (
					<div key={group[0]} className="relative border-b border-[#222222] pt-[10px] pb-[2px]">
						<div className="absolute top-[4px] left-[81px] h-[3px] w-[18px] border-t-2 border-dotted border-[#484848]" />
						{group.map(name => (
							<div key={name} className="flex h-[28px] items-center">
								<div className="ml-[9px] flex w-[20px] justify-center">{panelIcons[name]}</div>
								<span className="ml-[8px] whitespace-nowrap font-['Open_Sans',sans-serif] text-[10.9px] font-semibold text-[#dedede]">{name}</span>
							</div>
						))}
					</div>
				))}
			</div>
		</div>
	);
}

function Cursor() {
	return (
		<svg width="16" height="22" viewBox="0 0 16 22" className="absolute top-[68px] left-[872px]">
			<path d="M1 1 L1 16 L5 12.5 L8 19 L10.5 18 L7.5 11.5 L12.5 11.5 Z" fill="#ffffff" stroke="#000000" strokeWidth="1" />
		</svg>
	);
}

export default function App() {
	return (
		<div className={`relative flex h-[1080px] w-[1920px] flex-col overflow-hidden bg-black ${FONT}`}>
			<MenuBar />
			<ControlBar />
			<div className="flex h-[990px] shrink-0 bg-[#1f1f1f]">
				<Toolbar />
				<Doc />
				<div className="flex-1"></div>
				<RightPanel />
			</div>
			<Cursor />
		</div>
	);
}
